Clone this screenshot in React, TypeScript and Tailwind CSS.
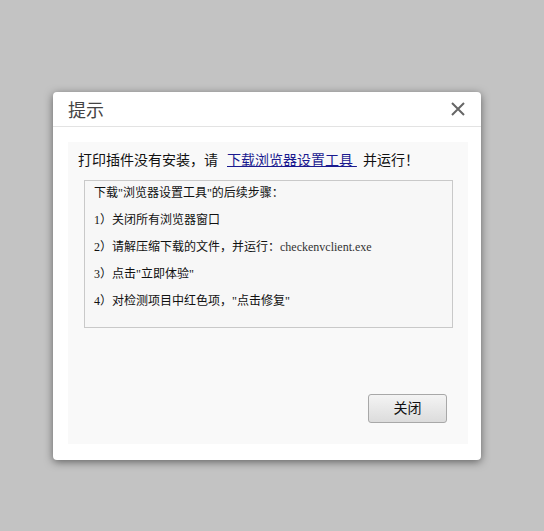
export default function App() {
  const steps = [
    "1）关闭所有浏览器窗口",
    "2）请解压缩下载的文件，并运行：",
    "3）点击\"立即体验\"",
    "4）对检测项目中红色项，\"点击修复\"",
  ];

  return (
    <div className="min-h-[531px] w-full bg-[#c3c3c3] pl-[53px] pt-[92px]">
      {/* Dialog */}
      <div className="flex h-[368px] w-[428px] flex-col rounded-[4px] bg-white shadow-[0_2px_8px_rgba(0,0,0,0.5)]">
        <div className="flex h-[35px] shrink-0 items-center justify-between border-b border-[#e3e3e3] pl-[15px] pr-[16px]">
          <span className="text-[18px] leading-none text-[#444] [font-family:'Noto_Sans_CJK_SC',sans-serif]">
            提示
          </span>
          <svg width="14" height="14" viewBox="0 0 14 14" className="text-[#666]">
            <path d="M1 1 L13 13 M13 1 L1 13" stroke="currentColor" strokeWidth="2" fill="none" />
          </svg>
        </div>

        <div className="flex flex-1 pb-[16px] pl-[15px] pr-[13px] pt-[15px]">
          <div className="flex min-w-0 flex-1 flex-col bg-[#f9f9f9] pl-[10px] pr-[15px] pt-[8px] [font-family:'Liberation_Serif','Noto_Sans_CJK_SC',serif]">
            <p className="whitespace-nowrap text-[14px] leading-[20px] text-[#111] [font-family:'Liberation_Sans','Noto_Sans_CJK_SC',sans-serif]">
              打印插件没有安装，请
              <a href="#" className="ml-[9px] text-[#1a1a8f] underline">
                下载浏览器设置工具{"\u00a0"}
              </a>
              <span className="ml-[6px]">并运行！</span>
            </p>

            <div className="ml-[6px] mt-[10px] h-[148px] w-[369px] border border-[#c9c9c9] bg-[#f7f7f7] pl-[9px] text-[12px] leading-[27px] text-[#111]">
              <div className="-mt-[1px]">下载"浏览器设置工具"的后续步骤：</div>
              {steps.map((s, i) => (
                <div key={i}>
                  {s}
                  {i === 1 && <span className="text-[#333]">checkenvclient.exe</span>}
                </div>
              ))}
            </div>

            <div className="mt-[66px] flex justify-end pr-[6px]">
              <button className="h-[29px] w-[79px] rounded-[3px] border border-[#a8a8a8] bg-gradient-to-b from-[#f4f4f4] to-[#dcdcdc] text-[14px] text-[#111] [font-family:'Liberation_Sans','Noto_Sans_CJK_SC',sans-serif]">
                关闭
              </button>
            </div>
          </div>
        </div>
      </div>
    </div>
  );
}
